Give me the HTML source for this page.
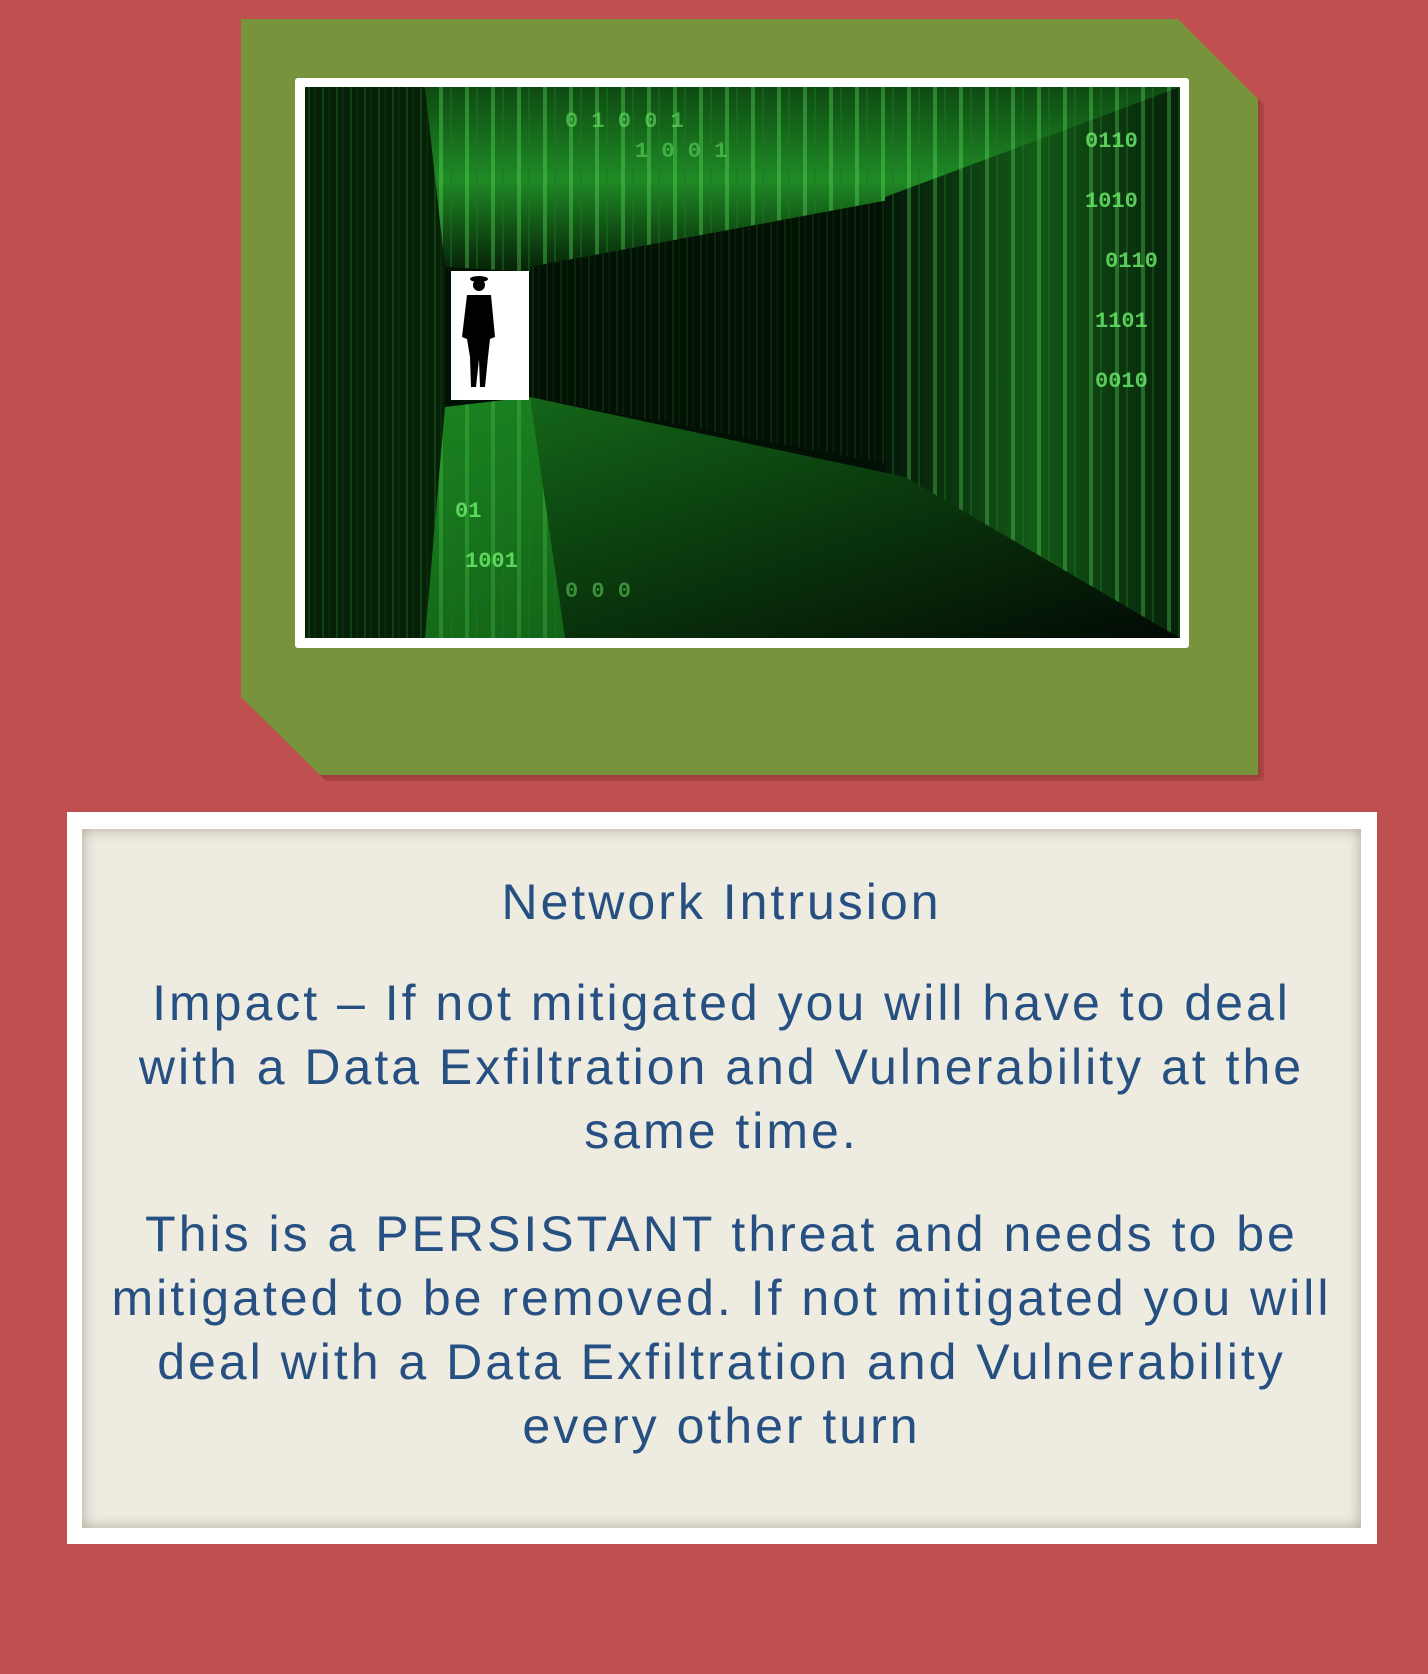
<!DOCTYPE html>
<html><head><meta charset="utf-8"><style>
html,body{margin:0;padding:0}
body{width:1428px;height:1674px;background:#c0504f;position:relative;overflow:hidden;font-family:"Liberation Sans",Arial,sans-serif}
.green{position:absolute;left:241px;top:19px;width:1017px;height:756px;background:#77933c;
clip-path:polygon(0 0,937px 0,1017px 80px,1017px 756px,79px 756px,0 678px);}
.shadow{position:absolute;left:247px;top:25px;width:1017px;height:756px;background:rgba(90,30,30,.35);filter:blur(4px);
clip-path:polygon(0 0,937px 0,1017px 80px,1017px 756px,79px 756px,0 678px);}
.frame{position:absolute;left:295px;top:78px;width:894px;height:570px;background:#fff;border-radius:3px}
.img{position:absolute;left:305px;top:87px;width:875px;height:551px;background:#000;overflow:hidden}
.box{position:absolute;left:67px;top:812px;width:1310px;height:732px;background:#fff}
.inner{position:absolute;left:82px;top:829px;width:1279px;height:699px;background:#eeebe1;box-shadow:inset 0 0 14px rgba(120,110,90,.55)}
.t{position:absolute;left:72px;width:1299px;text-align:center;color:#264f82;font-size:50px;line-height:64px;letter-spacing:3px}
.d{font-family:"Liberation Mono",monospace;fill:#6ef06e;font-weight:bold}
</style></head><body>
<div class="shadow"></div>
<div class="green"></div>
<div class="frame"></div>
<div class="img">
<svg width="875" height="551" viewBox="0 0 875 551">
<defs>
<pattern id="v" width="14" height="551" patternUnits="userSpaceOnUse"><rect x="3" width="2" height="551" fill="#2fa83a" opacity=".5"/><rect x="9" width="2" height="551" fill="#124d18" opacity=".6"/></pattern>
<pattern id="vb" width="26" height="551" patternUnits="userSpaceOnUse"><rect x="4" width="4" height="551" fill="#5fe35f" opacity=".6"/><rect x="15" width="2" height="551" fill="#1d7a22" opacity=".7"/></pattern>
<linearGradient id="ceil" x1="0" y1="0" x2="0" y2="1"><stop offset="0" stop-color="#0e4a12"/><stop offset=".5" stop-color="#1f8a25"/><stop offset="1" stop-color="#062008"/></linearGradient>
<linearGradient id="floor" x1="0" y1="0" x2="1" y2="1"><stop offset="0" stop-color="#166d1b"/><stop offset=".5" stop-color="#0a3a0d"/><stop offset="1" stop-color="#030a04"/></linearGradient>
<linearGradient id="rw" x1="0" y1="0" x2="1" y2="0"><stop offset="0" stop-color="#04160a"/><stop offset=".5" stop-color="#135a17"/><stop offset="1" stop-color="#06200a"/></linearGradient>
</defs>
<rect width="875" height="551" fill="#031004"/>
<polygon points="0,0 120,0 140,180 140,320 120,551 0,551" fill="#072008"/>
<polygon points="0,0 120,0 140,180 140,320 120,551 0,551" fill="url(#v)" opacity=".45"/>
<polygon points="120,0 875,0 875,60 600,110 230,185 140,180" fill="url(#ceil)"/>
<polygon points="120,0 875,0 875,60 600,110 230,185 140,180" fill="url(#vb)" opacity=".6"/>
<polygon points="225,180 600,110 600,380 225,310" fill="#041205"/>
<polygon points="225,180 600,110 600,380 225,310" fill="url(#v)" opacity=".3"/>
<polygon points="580,110 875,0 875,551 580,390" fill="url(#rw)"/>
<polygon points="580,110 875,0 875,551 580,390" fill="url(#vb)" opacity=".55"/>
<polygon points="140,320 225,310 600,390 875,551 120,551" fill="url(#floor)"/>
<polygon points="140,320 225,310 260,551 120,551" fill="#1f9a25" opacity=".5"/>
<polygon points="140,320 225,310 260,551 120,551" fill="url(#vb)" opacity=".4"/>
<g class="d" font-size="22" opacity=".8">
<text x="780" y="60">0110</text><text x="780" y="120">1010</text><text x="800" y="180">0110</text><text x="790" y="240">1101</text><text x="790" y="300">0010</text>
<text x="260" y="40" opacity=".7">0 1 0 0 1</text><text x="330" y="70" opacity=".6">1 0 0 1</text>
<text x="150" y="430">01</text><text x="160" y="480">1001</text><text x="260" y="510" opacity=".6">0 0 0</text>
</g>
<rect x="146" y="184" width="78" height="129" fill="#fff"/>
<g fill="#000">
<ellipse cx="174" cy="192" rx="9" ry="3"/>
<circle cx="174" cy="198" r="6"/>
<path d="M162 208 L186 208 L190 250 L185 252 L183 270 L180 300 L175 300 L174 272 L171 300 L166 300 L165 270 L162 252 L157 250 Z"/>
</g>
</svg>
</div>
<div class="box"></div>
<div class="inner"></div>
<div class="t" style="top:870px">Network Intrusion</div>
<div class="t" style="top:971px">Impact – If not mitigated you will have to deal<br>with a Data Exfiltration and Vulnerability at the<br>same time.</div>
<div class="t" style="top:1202px">This is a PERSISTANT threat and needs to be<br>mitigated to be removed. If not mitigated you will<br>deal with a Data Exfiltration and Vulnerability<br>every other turn</div>
</body></html>
